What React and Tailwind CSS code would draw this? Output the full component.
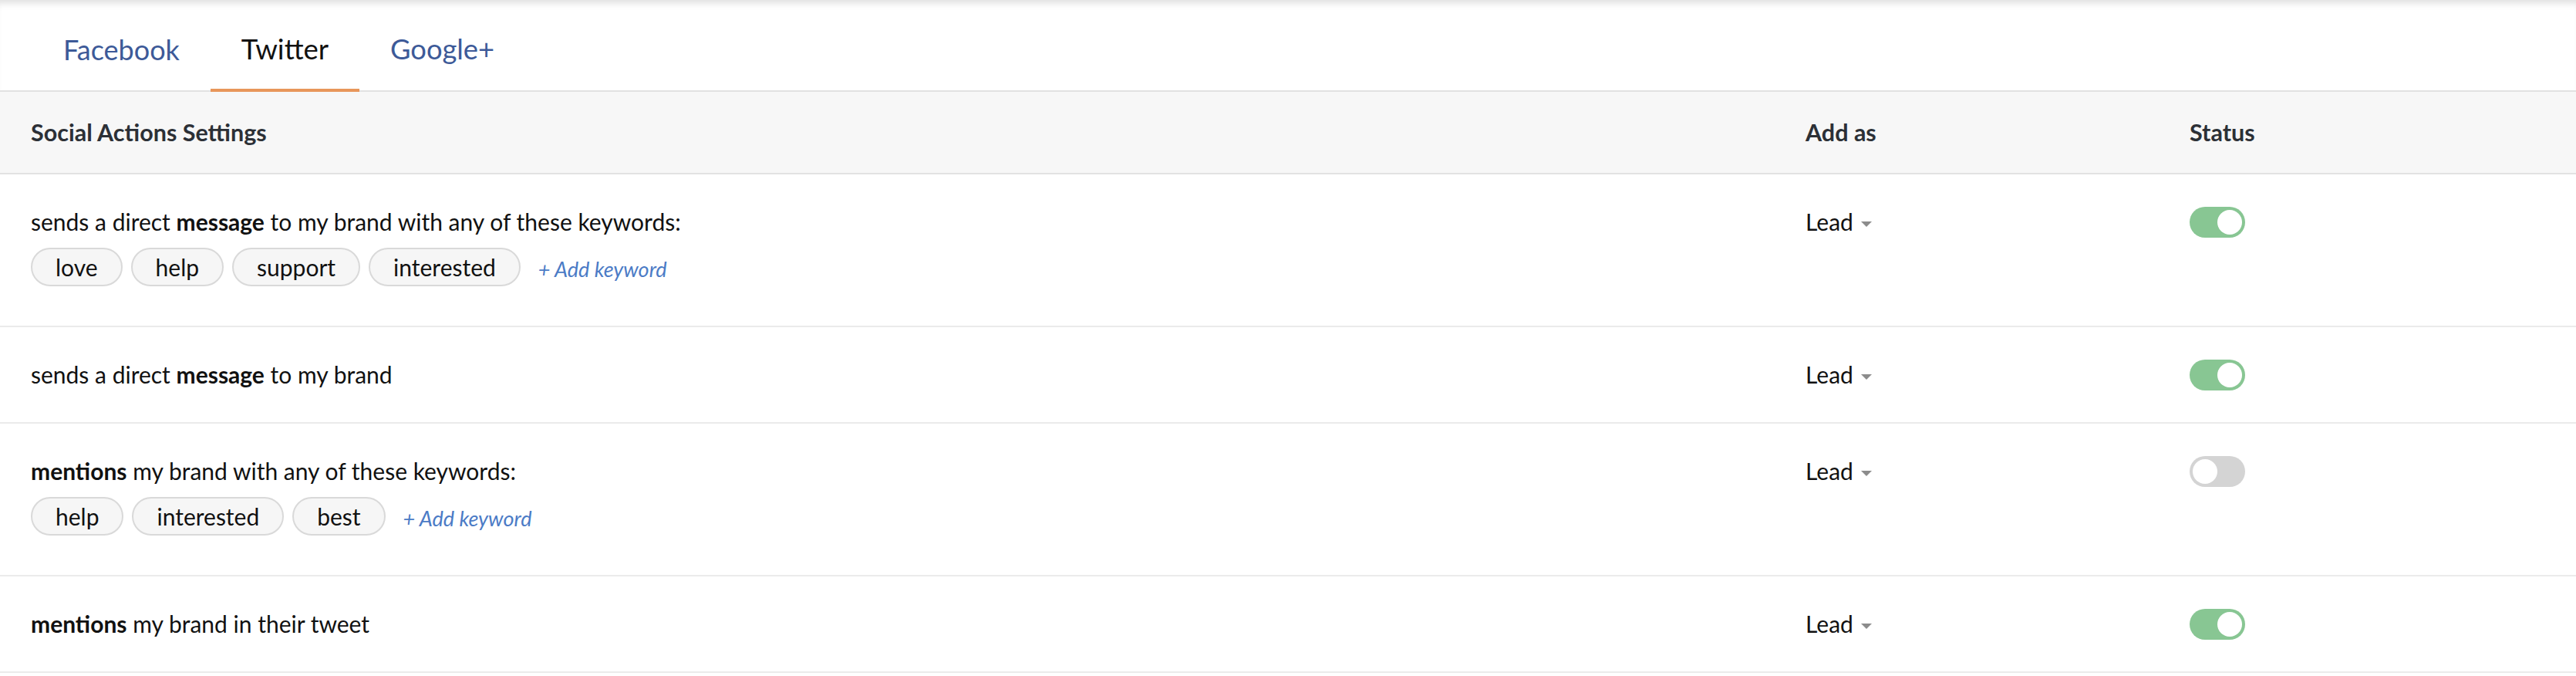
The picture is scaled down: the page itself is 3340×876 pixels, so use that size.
import React from "react";

const rows = [
  {
    parts: [["sends a direct ", false], ["message", true], [" to my brand with any of these keywords:", false]],
    keywords: ["love", "help", "support", "interested"],
    on: true,
  },
  {
    parts: [["sends a direct ", false], ["message", true], [" to my brand", false]],
    keywords: null,
    on: true,
  },
  {
    parts: [["mentions", true], [" my brand with any of these keywords:", false]],
    keywords: ["help", "interested", "best"],
    on: false,
  },
  {
    parts: [["mentions", true], [" my brand in their tweet", false]],
    keywords: null,
    on: true,
  },
];

function Toggle({ on }) {
  return (
    <div
      className={
        "flex h-[40px] w-[72px] items-center rounded-full p-[4px] " +
        (on ? "justify-end bg-[#88c693]" : "justify-start bg-[#d4d4d4]")
      }
    >
      <div className="h-[32px] w-[32px] rounded-full bg-white" />
    </div>
  );
}

function Caret() {
  return (
    <svg width="14" height="8" viewBox="0 0 14 8" className="ml-[10px] mt-[6px]">
      <path d="M0 0 L14 0 L7 7 Z" fill="#8c8c8c" />
    </svg>
  );
}

export default function App() {
  return (
    <div className="min-h-[876px] w-full bg-white font-['Lato',sans-serif] text-[#111]">
      <div className="flex h-[119px] border-b-2 border-[#e2e2e2] pl-[42px] shadow-[inset_0_10px_10px_-6px_rgba(0,0,0,0.13)]">
        <div className="-mb-[2px] flex h-[119px] items-center border-b-4 border-transparent px-[40px] pt-[12px] text-[36px] text-[#3d5a98]">
          Facebook
        </div>
        <div className="-mb-[2px] flex h-[119px] items-center border-b-4 border-[#e8965a] px-[40px] pt-[12px] text-[36.5px] text-[#111]">
          Twitter
        </div>
        <div className="-mb-[2px] flex h-[119px] items-center border-b-4 border-transparent px-[40px] pt-[12px] text-[36.3px] text-[#3d5a98]">
          Google+
        </div>
      </div>

      <div className="grid h-[107px] grid-cols-[2301px_498px_1fr] items-center border-b-2 border-[#e2e2e2] bg-[#f7f7f7] pl-[40px] text-[30.5px] font-bold text-[#2c3036]">
        <div>Social Actions Settings</div>
        <div>Add as</div>
        <div>Status</div>
      </div>

      {rows.map((r, i) => (
        <div
          key={i}
          className="grid grid-cols-[2301px_498px_1fr] border-b-2 border-[#ebebeb] py-[43px] pl-[40px] text-[30px]"
        >
          <div>
            <div className="leading-[37px]">
              {r.parts.map(([t, b], j) =>
                b ? (
                  <span key={j} className="font-bold">
                    {t}
                  </span>
                ) : (
                  <span key={j}>{t}</span>
                )
              )}
            </div>
            {r.keywords && (
              <div className="mb-[8px] mt-[15px] flex items-center gap-[11px]">
                {r.keywords.map((k) => (
                  <div
                    key={k}
                    className="flex h-[50px] items-center rounded-full border-2 border-[#d9d9d9] bg-[#f6f6f6] px-[30px] text-[30px]"
                  >
                    {k}
                  </div>
                ))}
                <span className="ml-[12px] mt-[6px] text-[27px] italic text-[#4b7bc6]">+ Add keyword</span>
              </div>
            )}
          </div>
          <div className="flex h-[37px] items-center leading-[37px]">
            <span>Lead</span>
            <Caret />
          </div>
          <div className="flex h-[37px] items-center">
            <Toggle on={r.on} />
          </div>
        </div>
      ))}
    </div>
  );
}
